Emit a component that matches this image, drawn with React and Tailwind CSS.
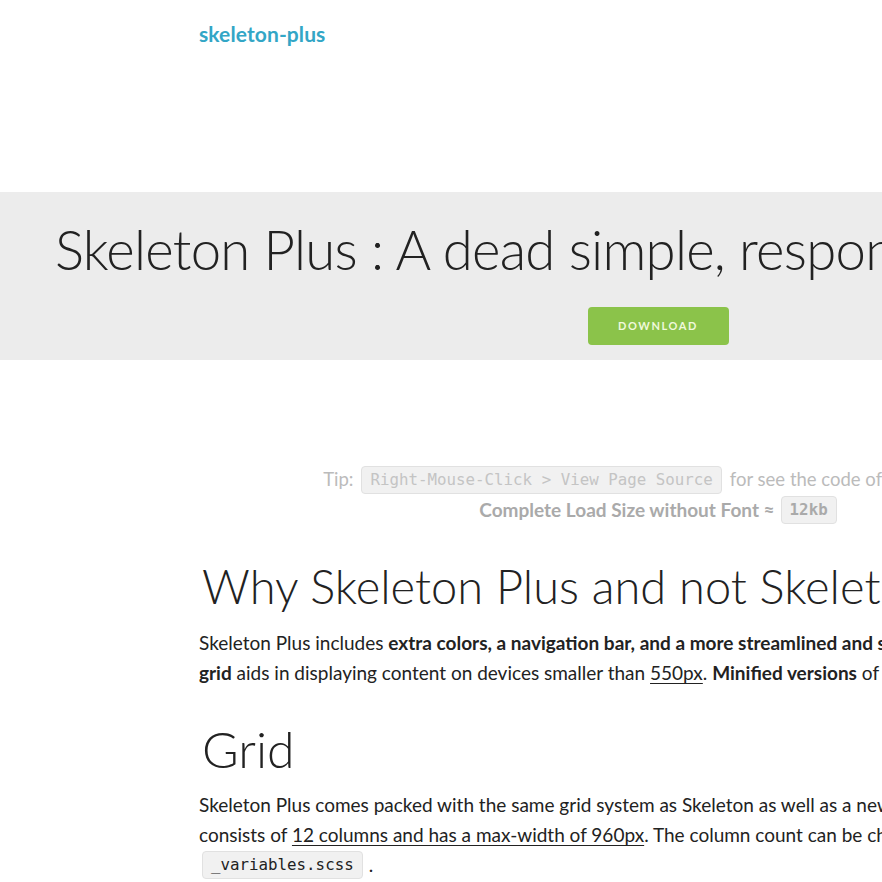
import React from "react";

const code =
  "inline-flex items-center h-[28px] rounded-[4px] border border-[#e1e1e1] bg-[#f1f1f1] px-[8px] text-[15.8px] whitespace-nowrap";
const mono = { fontFamily: "'DejaVu Sans Mono', monospace" };

export default function App() {
  return (
    <div
      className="w-[882px] h-[882px] overflow-hidden bg-white text-[#222]"
      style={{ fontFamily: "Lato, 'Open Sans', sans-serif" }}
    >
      <div className="w-[1316px]">
        <header className="h-[67px] px-[199px] flex items-center">
          <span className="text-[21px] font-bold text-[#33a6c6] leading-none tracking-[0.1px]">
            skeleton-plus
          </span>
        </header>
        <div className="h-[125px]" />
        <section className="bg-[#ececec] h-[168px] flex flex-col">
          <h1 className="mt-[25px] ml-[55px] text-[54.5px] font-light leading-[64px] text-[#222] whitespace-nowrap tracking-[-0.75px]">
            Skeleton Plus : A dead simple, responsive boilerplate.
          </h1>
          <button className="mt-[26px] self-center w-[141px] h-[38px] rounded-[4px] bg-[#8bc34a] text-[#f0f9dc] text-[11px] font-bold tracking-[1.6px] uppercase">
            Download
          </button>
        </section>
        <div className="h-[106px]" />
        <div className="flex flex-col items-center whitespace-nowrap">
          <div className="flex items-center h-[28px] gap-[8px] text-[#bbb] text-[18.5px]">
            <span>Tip:</span>
            <code className={code} style={{ ...mono, color: "#c4c4c4" }}>
              Right-Mouse-Click &gt; View Page Source
            </code>
            <span className="w-[263px]">for see the code of this page.</span>
          </div>
          <div className="flex items-center h-[28px] mt-[2px] gap-[6px] font-bold text-[#aaa] text-[19px]">
            <span>Complete Load Size without Font ≈</span>
            <code className={code} style={{ ...mono, color: "#aaa" }}>
              12kb
            </code>
          </div>
        </div>
        <div className="px-[199px]">
          <h2 className="mt-[37px] ml-[3px] text-[47px] font-light leading-[50px] whitespace-nowrap">
            Why Skeleton Plus and not Skeleton?
          </h2>
          <p className="mt-[17px] text-[19px] leading-[30px] whitespace-nowrap">
            Skeleton Plus includes{" "}
            <b>extra colors, a navigation bar, and a more streamlined and simplified grid.</b> The mobile-first
            <br />
            <b>grid</b> aids in displaying content on devices smaller than{" "}
            <span className="underline underline-offset-[3px]">550px</span>.{" "}
            <b>Minified versions</b> of all files are included.
          </p>
          <h1 className="mt-[33px] ml-[3px] text-[50px] font-light leading-[56px] whitespace-nowrap">
            Grid
          </h1>
          <div className="mt-[13px] text-[19px] leading-[30px] whitespace-nowrap">
            <div>
              Skeleton Plus comes packed with the same grid system as Skeleton as well as a new mobile grid. The grid
            </div>
            <div>
              consists of{" "}
              <span className="underline underline-offset-[3px]">12 columns and has a max-width of 960px</span>. The
              column count can be changed in
            </div>
            <div className="flex items-center h-[30px] gap-[6px]">
              <code className={code + " ml-[3px]"} style={{ ...mono, color: "#222" }}>
                _variables.scss
              </code>
              <span>.</span>
            </div>
          </div>
        </div>
      </div>
    </div>
  );
}
